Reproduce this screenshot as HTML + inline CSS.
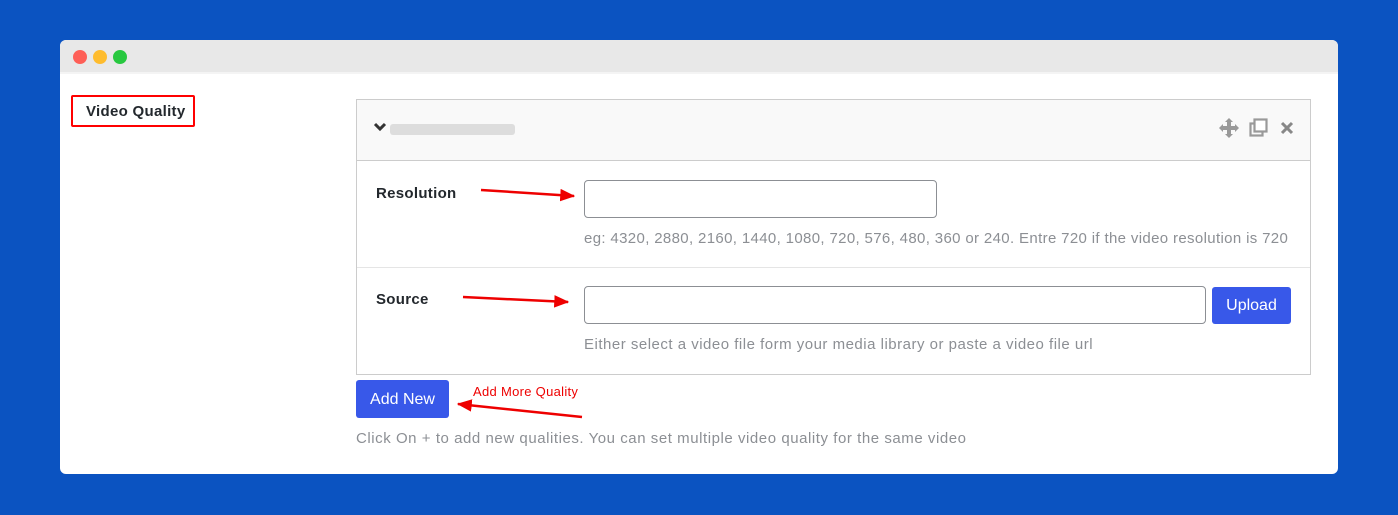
<!DOCTYPE html>
<html><head><style>
body{margin:0;width:1398px;height:515px;background:#0b53c1;font-family:"Liberation Sans",sans-serif;position:relative;overflow:hidden}
.win{position:absolute;left:60px;top:40px;width:1278px;height:434px;background:#fff;border-radius:6px;overflow:hidden}
.bar{height:32px;background:#e8e8e8;border-bottom:2px solid #f4f4f4}
.dot{position:absolute;top:10px;width:14px;height:14px;border-radius:50%}
.a{position:absolute}
.lbl{font-size:15px;font-weight:bold;color:#23282d}
.inp{position:absolute;border:1px solid #8c8f94;border-radius:4px;background:#fff;height:36px}
.help{position:absolute;font-size:15px;color:#8c8f94;letter-spacing:0.45px}
.btn{position:absolute;background:#3858e9;color:#fff;font-size:16px;border-radius:3px;text-align:center}
</style></head><body>
<div class="win">
<div class="bar"></div>
<div class="dot" style="left:13px;background:#fe5f57"></div>
<div class="dot" style="left:33px;background:#febc2e"></div>
<div class="dot" style="left:53px;background:#28c840"></div>
</div>
<div class="a" style="left:71px;top:95px;width:120px;height:28px;border:2px solid #f00;border-radius:2px"></div>
<div class="a lbl" style="left:86px;top:103px;letter-spacing:0.3px">Video Quality</div>
<div class="a" style="left:356px;top:99px;width:953px;height:274px;border:1px solid #ccc;background:#fff"></div>
<div class="a" style="left:357px;top:100px;width:953px;height:60px;background:#f9f9f9;border-bottom:1px solid #ccc"></div>
<svg class="a" style="left:373px;top:122px" width="14" height="10"><path d="M2 2 L7 7 L12 2" stroke="#333" stroke-width="3" fill="none"/></svg>
<div class="a" style="left:390px;top:124px;width:125px;height:11px;background:#ddd;border-radius:3px"></div>
<svg class="a" style="left:1219px;top:118px" width="20" height="20" viewBox="0 0 20 20"><path d="M10 0 L14 4 H12 V8 H16 V6 L20 10 L16 14 V12 H12 V16 H14 L10 20 L6 16 H8 V12 H4 V14 L0 10 L4 6 V8 H8 V4 H6 Z" fill="#999"/></svg>
<svg class="a" style="left:1249px;top:118px" width="20" height="20"><rect x="1.5" y="5.5" width="12" height="12" fill="none" stroke="#999" stroke-width="2.2"/><rect x="5.5" y="1.5" width="12" height="12" fill="#fff" stroke="#999" stroke-width="2.2"/></svg>
<svg class="a" style="left:1279px;top:120px" width="16" height="16"><path d="M3 3 L13 13 M13 3 L3 13" stroke="#888" stroke-width="3"/></svg>
<div class="a" style="left:357px;top:267px;width:953px;height:1px;background:#e5e5e5"></div>
<div class="a lbl" style="left:376px;top:185px;letter-spacing:0.3px">Resolution</div>
<div class="inp" style="left:584px;top:180px;width:351px"></div>
<div class="help" style="left:584px;top:230px;letter-spacing:0.35px">eg: 4320, 2880, 2160, 1440, 1080, 720, 576, 480, 360 or 240. Entre 720 if the video resolution is 720</div>
<div class="a lbl" style="left:376px;top:291px;letter-spacing:0.3px">Source</div>
<div class="inp" style="left:584px;top:286px;width:620px"></div>
<div class="btn" style="left:1212px;top:287px;width:79px;height:37px;line-height:38px">Upload</div>
<div class="help" style="left:584px;top:336px;letter-spacing:0.5px">Either select a video file form your media library or paste a video file url</div>
<div class="btn" style="left:356px;top:380px;width:93px;height:38px;line-height:40px">Add New</div>
<div class="help" style="left:356px;top:430px;letter-spacing:0.55px">Click On + to add new qualities. You can set multiple video quality for the same video</div>
<div class="a" style="left:473px;top:384px;font-size:13px;color:#e00;letter-spacing:0.3px">Add More Quality</div>
<svg class="a" style="left:0;top:0" width="1398" height="515">
<defs><marker id="m" markerWidth="6" markerHeight="5" refX="5.5" refY="2.5" orient="auto"><path d="M0 0 L6 2.5 L0 5 Z" fill="#e00"/></marker></defs>
<g stroke="#e00" stroke-width="2.5" marker-end="url(#m)">
<line x1="481" y1="190" x2="574" y2="196"/>
<line x1="463" y1="297" x2="568" y2="302"/>
<line x1="582" y1="417" x2="458" y2="404"/>
</g></svg>
</body></html>
